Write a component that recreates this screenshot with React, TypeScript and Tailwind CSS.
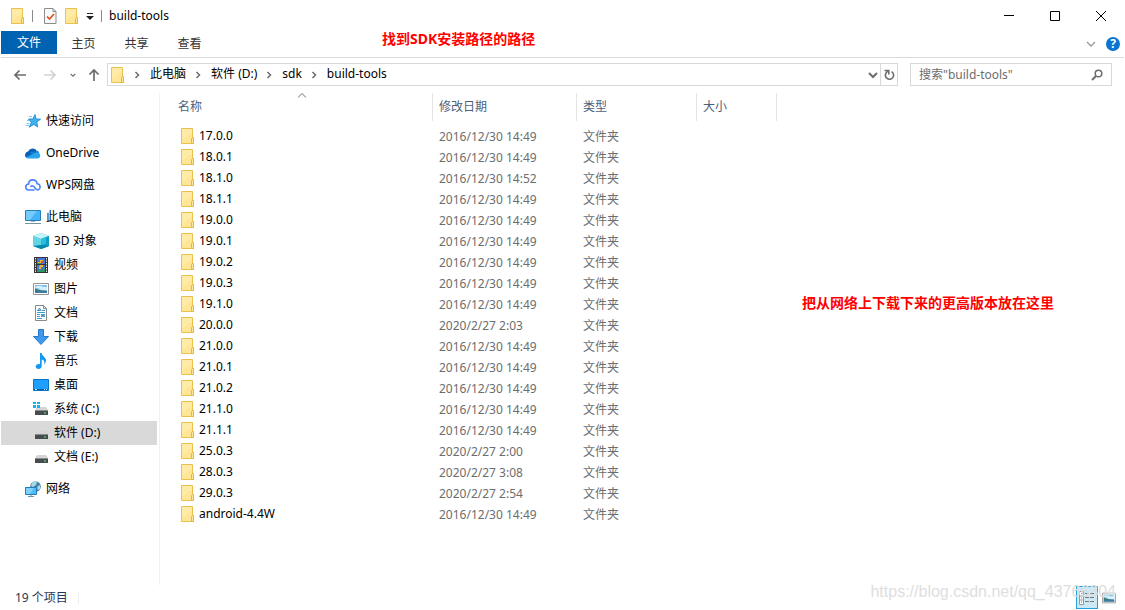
import type { ReactNode } from "react";

type FileRow = {
  name: string;
  date: string;
};

type NavItem = {
  label: string;
  icon: ReactNode;
  nested?: boolean;
  active?: boolean;
};

const files: FileRow[] = [
  { name: "17.0.0", date: "2016/12/30 14:49" },
  { name: "18.0.1", date: "2016/12/30 14:49" },
  { name: "18.1.0", date: "2016/12/30 14:52" },
  { name: "18.1.1", date: "2016/12/30 14:49" },
  { name: "19.0.0", date: "2016/12/30 14:49" },
  { name: "19.0.1", date: "2016/12/30 14:49" },
  { name: "19.0.2", date: "2016/12/30 14:49" },
  { name: "19.0.3", date: "2016/12/30 14:49" },
  { name: "19.1.0", date: "2016/12/30 14:49" },
  { name: "20.0.0", date: "2020/2/27 2:03" },
  { name: "21.0.0", date: "2016/12/30 14:49" },
  { name: "21.0.1", date: "2016/12/30 14:49" },
  { name: "21.0.2", date: "2016/12/30 14:49" },
  { name: "21.1.0", date: "2016/12/30 14:49" },
  { name: "21.1.1", date: "2016/12/30 14:49" },
  { name: "25.0.3", date: "2020/2/27 2:00" },
  { name: "28.0.3", date: "2020/2/27 3:08" },
  { name: "29.0.3", date: "2020/2/27 2:54" },
  { name: "android-4.4W", date: "2016/12/30 14:49" },
];

function FolderIcon() {
  return (
    <svg width="14" height="16" viewBox="0 0 14 16" className="shrink-0" aria-hidden="true">
      <path d="M.5.5h11v9h1v6H.5z" fill="#ffe594" stroke="#eac14d" />
      <path d="M1 1h10v4L1 12z" fill="#ffeba8" />
      <path d="M10.500 15.500v-5l1-1h1v6z" fill="#ffe594" stroke="#e5b93f" />
    </svg>
  );
}

function CheckDocIcon() {
  return (
    <svg width="13" height="16" viewBox="0 0 13 16" aria-hidden="true">
      <path d="M.5.5h8.500l3 3v12H.5z" fill="#f7f9fb" stroke="#8b8b8b" />
      <path d="M9 .5v3h3" fill="none" stroke="#8b8b8b" />
      <path d="M3 8.500l2.500 2.500 4.500-5" fill="none" stroke="#e8501e" strokeWidth="1.700" />
    </svg>
  );
}

function StarIcon() {
  return (
    <svg width="16" height="16" viewBox="0 0 16 16" aria-hidden="true">
      <path d="M10 1.500l1 4.400 4.500.3-3.700 2.800.9 4.900-3.900-2.400-4.500 2.700 2-4.900L3.500 6.100l4.300-.2z" fill="#3fb1ee" stroke="#1784cc" strokeWidth=".8" />
      <path d="M4 3.500h3M2 7.500h3M1.500 10.500h3M1 12.500h3" stroke="#5db9ef" strokeWidth=".8" />
    </svg>
  );
}

function OneDriveIcon() {
  return (
    <svg width="16" height="16" viewBox="0 0 16 16" aria-hidden="true">
      <path d="M1 12.500A3.600 3.600 0 0 1 3 6.500a5 5 0 0 1 8.800-.8L8 12z" fill="#0a62b5" />
      <path d="M5 7.200c1.500-.8 3-.5 4.500.5l3-2.100a3.800 3.800 0 0 1 1.800 2.800L9 11z" fill="#1380d8" />
      <path d="M1 12.300l9-4.200c1-.9 2.300-1 3.300-.2A2.900 2.900 0 0 1 13 13.500H3.500c-1 0-2-.4-2.500-1.200z" fill="#29a5ec" />
    </svg>
  );
}

function WpsCloudIcon() {
  return (
    <svg width="16" height="16" viewBox="0 0 16 16" fill="none" stroke="#4a83f3" strokeWidth="1.600" strokeLinecap="round" aria-hidden="true">
      <path d="M9 13H4a3 3 0 0 1-.4-6C3.700 4.500 5.500 2.900 7.800 2.900c2.200 0 4 1.500 4.300 3.900A3.200 3.200 0 0 1 13 13c-2 0-2.500-1.500-3.500-2.800S7 8.400 6 9.500" />
    </svg>
  );
}

function ComputerIcon() {
  return (
    <svg width="16" height="16" viewBox="0 0 16 16" aria-hidden="true">
      <path d="M.5 1.500h15v10H.5z" fill="#45b3f8" stroke="#277fb3" />
      <path d="M1 2h11L5 11H1z" fill="#76cbff" />
      <path d="M6 12h4v1H6z" fill="#9fb8c7" />
      <path d="M0 14.500h16" stroke="#7891a0" />
    </svg>
  );
}

function CubeIcon() {
  return (
    <svg width="16" height="16" viewBox="0 0 16 16" aria-hidden="true">
      <path d="M0 3l8-3 8 3v10l-8 3-8-3z" fill="#2fb9d2" />
      <path d="M0 3l8-3 8 3-8 3z" fill="#c4f3fa" />
      <path d="M8 6l8-3v10l-8 3z" fill="#0c9fc0" />
      <path d="M0 3l8 3v6l-8 1z" fill="#62d5e4" />
      <path d="M0 13l8-1 8 1-8 3z" fill="#0787aa" />
      <path d="M8 6l5-2v7l-5 1z" fill="#28bdda" />
    </svg>
  );
}

function VideoIcon() {
  return (
    <svg width="16" height="16" viewBox="0 0 16 16" aria-hidden="true">
      <path d="M1 0h14v16H1z" fill="#343434" />
      <path d="M4 1h8v6H4zM4 8h8v7H4z" fill="#4476dc" />
      <path d="M2.500 1v14M13.500 1v14" stroke="#e4e4e4" strokeDasharray="1.500 1" />
      <path d="M5 5h2V3h3v3H5zM7 8h3v2H8v2H6v-2z" fill="#edb62d" />
      <path d="M8 4h2v2H8z" fill="#dd5140" />
      <path d="M4 12l3 1 5-2v4H4zM4 6h4v1H4z" fill="#35936c" />
    </svg>
  );
}

function PictureIcon({ size = 16 }: { size?: number }) {
  return (
    <svg width={size} height={size} viewBox="0 0 16 16" aria-hidden="true">
      <path d="M.5 2.500h15v11H.5z" fill="#fff" stroke="#969696" />
      <path d="M2 4h12v8H2z" fill="#83c3ef" />
      <path d="M4 5h4l2 1h4v3H8L5 7H2z" fill="#d9effc" />
      <path d="M2 7.500l4 1.500 8 1v2H2z" fill="#3d7771" />
      <path d="M2 11l5-1 7 1v1H2z" fill="#3f7fb0" />
    </svg>
  );
}

function DocumentIcon() {
  return (
    <svg width="16" height="16" viewBox="0 0 16 16" aria-hidden="true">
      <path d="M2.500.5h8l3 3v12h-11z" fill="#fff" stroke="#848c91" />
      <path d="M10.500.5v3h3" fill="none" stroke="#848c91" />
      <path d="M4 5.500h3m2 0h3M4 7.500h8M4 9.500h3m1 0h4M4 11.500h3m1 0h4M4 13.500h5" stroke="#3f9ed8" />
      <path d="M5 6l1.500-3L8 6" fill="none" stroke="#2a80be" />
      <path d="M8 9h4v3H8z" fill="#5a9fca" />
    </svg>
  );
}

function DownloadIcon() {
  return (
    <svg width="16" height="16" viewBox="0 0 16 16" aria-hidden="true">
      <path d="M5.500.5h5v7h5L8 15.500.5 7.500h5z" fill="#3c99ed" stroke="#2777c6" />
    </svg>
  );
}

function MusicIcon() {
  return (
    <svg width="16" height="16" viewBox="0 0 16 16" aria-hidden="true">
      <path d="M7 0h1.700c0 3 4.300 4 4.300 7.500 0 1.500-.7 3-1.800 4 .7-3-.2-4.500-2.500-5V13c0 1.800-1.400 3-3.200 3S2.700 15 2.700 13.600 4.200 11 5.800 11c.5 0 .9.1 1.200.3z" fill="#1299f2" />
    </svg>
  );
}

function DesktopIcon() {
  return (
    <svg width="16" height="16" viewBox="0 0 16 16" aria-hidden="true">
      <path d="M.5 2.500h15v11H.5z" fill="#1f9fff" stroke="#0875ca" />
      <path d="M1 12h14v1H1z" fill="#075d9f" />
      <path d="M2 12.500h2m7 0h1m1 0h1" stroke="#c7e9ff" />
    </svg>
  );
}

function DriveIcon({ system }: { system?: boolean }) {
  return (
    <svg width="16" height="16" viewBox="0 0 16 16" aria-hidden="true">
      <path d="M4 6h9l2 3H2z" fill="#d3d5d6" />
      <path d="M2 9h13v5H2z" fill="#484b4d" />
      <path d="M2 9.500h13" stroke="#888c8e" />
      <path d="M11 11.500h2v1h-2z" fill="#45f75c" />
      {system && <path d="M0 1h3v2H0zM4 1h3v2H4zM0 4h3v3H0zM4 4h3v3H4z" fill="#12b4ef" />}
    </svg>
  );
}

function NetworkIcon() {
  return (
    <svg width="16" height="16" viewBox="0 0 16 16" aria-hidden="true">
      <circle cx="10.500" cy="5.500" r="5.300" fill="#4580a5" />
      <path d="M7 2l3-2 2 1-1 3-3 2-2-1zM13 5l2-1v4l-2 1-1-2z" fill="#a9d8e6" />
      <path d="M.5 6.500h11v7H.5z" fill="#4eb9fc" stroke="#227eb3" />
      <path d="M1 7h8l-4 6H1z" fill="#7fd1ff" />
      <path d="M3 15.500h6M6 14v1" stroke="#6d96ac" />
    </svg>
  );
}

function Chevron({ className = "" }: { className?: string }) {
  return (
    <svg width="10" height="10" viewBox="0 0 10 10" fill="none" stroke="currentColor" strokeWidth="1.500" className={className} aria-hidden="true">
      <path d="M2 3.500l3 3 3-3" />
    </svg>
  );
}

const navGroups: NavItem[][] = [
  [{ label: "快速访问", icon: <StarIcon /> }],
  [{ label: "OneDrive", icon: <OneDriveIcon /> }],
  [{ label: "WPS网盘", icon: <WpsCloudIcon /> }],
  [
    { label: "此电脑", icon: <ComputerIcon /> },
    { label: "3D 对象", icon: <CubeIcon />, nested: true },
    { label: "视频", icon: <VideoIcon />, nested: true },
    { label: "图片", icon: <PictureIcon />, nested: true },
    { label: "文档", icon: <DocumentIcon />, nested: true },
    { label: "下载", icon: <DownloadIcon />, nested: true },
    { label: "音乐", icon: <MusicIcon />, nested: true },
    { label: "桌面", icon: <DesktopIcon />, nested: true },
    { label: "系统 (C:)", icon: <DriveIcon system />, nested: true },
    { label: "软件 (D:)", icon: <DriveIcon />, nested: true, active: true },
    { label: "文档 (E:)", icon: <DriveIcon />, nested: true },
  ],
  [{ label: "网络", icon: <NetworkIcon /> }],
];

function TitleBar() {
  return (
    <header className="flex h-[31px] items-center pl-[10px]">
      <FolderIcon />
      <span className="ml-[7px] h-3 w-px bg-[#8a8a8a]" />
      <button type="button" aria-label="属性" className="ml-[11px]">
        <CheckDocIcon />
      </button>
      <button type="button" aria-label="新建文件夹" className="ml-2">
        <FolderIcon />
      </button>
      <button type="button" aria-label="自定义快速访问工具栏" className="ml-[7px]">
        <svg width="8" height="8" viewBox="0 0 8 8" aria-hidden="true">
          <path d="M1 1.500h6" stroke="#222" />
          <path d="M0 4h8L4 8z" fill="#222" />
        </svg>
      </button>
      <span className="ml-[7px] h-3 w-px bg-[#8a8a8a]" />
      <h1 className="ml-[7px]">build-tools</h1>
      <div className="ml-auto flex self-stretch">
        <button type="button" aria-label="最小化" className="flex w-[46px] items-center justify-center">
          <svg width="10" height="11" viewBox="0 0 10 11" stroke="#000" aria-hidden="true">
            <path d="M0 5.500h10" />
          </svg>
        </button>
        <button type="button" aria-label="最大化" className="flex w-[46px] items-center justify-center">
          <svg width="10" height="10" viewBox="0 0 10 10" fill="none" stroke="#000" aria-hidden="true">
            <path d="M.5.5h9v9h-9z" />
          </svg>
        </button>
        <button type="button" aria-label="关闭" className="flex w-[46px] items-center justify-center">
          <svg width="10" height="10" viewBox="0 0 10 10" stroke="#000" aria-hidden="true">
            <path d="M0 0l10 10M10 0L0 10" />
          </svg>
        </button>
      </div>
    </header>
  );
}

function RibbonTabs() {
  return (
    <div className="flex h-[27px] items-start border-b border-[#dadbdc] text-[#333]">
      <button type="button" className="h-[23px] w-14 bg-[#0063b1] pt-px text-white">
        文件
      </button>
      {["主页", "共享", "查看"].map((tab) => (
        <button key={tab} type="button" className="h-[23px] w-[53px] pt-[2px]">
          {tab}
        </button>
      ))}
      <div className="ml-auto flex h-[26px] items-center gap-[10px] pr-1">
        <button type="button" aria-label="展开功能区" className="text-[#9a9a9a]">
          <svg width="10" height="10" viewBox="0 0 10 10" fill="none" stroke="currentColor" strokeWidth="1.300" aria-hidden="true">
            <path d="M1 3l4 4 4-4" />
          </svg>
        </button>
        <button
          type="button"
          aria-label="帮助"
          className="size-[14px] rounded-full bg-[#0a74d1] text-center text-xs leading-[14px] font-bold text-white"
        >
          ?
        </button>
      </div>
    </div>
  );
}

function AddressBar() {
  return (
    <div className="flex h-[35px] items-center pr-3 pb-[2px] pl-3 text-[#6d6d6d]">
      <button type="button" aria-label="后退">
        <svg width="14" height="12" viewBox="0 0 14 12" fill="none" stroke="#6b6b6b" strokeWidth="1.700" aria-hidden="true">
          <path d="M13 6H2M6.500 1.500L2 6l4.500 4.500" />
        </svg>
      </button>
      <button type="button" aria-label="前进" className="ml-4">
        <svg width="14" height="12" viewBox="0 0 14 12" fill="none" stroke="#d2d2d2" strokeWidth="1.700" aria-hidden="true">
          <path d="M1 6h11M7.500 1.500L12 6l-4.500 4.500" />
        </svg>
      </button>
      <button type="button" aria-label="最近浏览的位置" className="ml-3">
        <Chevron className="size-2" />
      </button>
      <button type="button" aria-label="上移" className="ml-[11px]">
        <svg width="12" height="13" viewBox="0 0 12 13" fill="none" stroke="#6b6b6b" strokeWidth="1.700" aria-hidden="true">
          <path d="M6 13V2M1.500 6.500L6 2l4.500 4.500" />
        </svg>
      </button>
      <nav aria-label="路径" className="ml-[7px] flex h-[23px] min-w-0 flex-1 items-center border border-[#d9d9d9] pl-[3px]">
        <FolderIcon />
        {["此电脑", "软件 (D:)", "sdk", "build-tools"].map((part) => (
          <span key={part} className="flex items-center">
            <Chevron className="mr-2 ml-[7px] -rotate-90" />
            <a href="#" className="pb-[2px] text-black">
              {part}
            </a>
          </span>
        ))}
        <button type="button" aria-label="以前的位置" className="ml-auto mr-[2px]">
          <svg width="10" height="10" viewBox="0 0 10 10" fill="none" stroke="currentColor" strokeWidth="2" aria-hidden="true">
            <path d="M1 3l4 4 4-4" />
          </svg>
        </button>
        <button type="button" aria-label="刷新" className="flex w-[17px] items-center justify-center self-stretch border-l border-[#d9d9d9]">
          <svg width="11" height="12" viewBox="0 0 11 12" fill="none" stroke="currentColor" strokeWidth="1.600" aria-hidden="true">
            <path d="M7.500 2.600A4.100 4.100 0 1 1 2.400 3.500L4.300 1.700" />
            <path d="M.5 1.500h4.300v4" />
          </svg>
        </button>
      </nav>
      <div className="ml-3 flex h-[23px] w-[202px] items-center border border-[#d9d9d9] px-2">
        <input
          type="search"
          aria-label="搜索"
          placeholder='搜索"build-tools"'
          className="h-5 min-w-0 flex-1 pb-px outline-none placeholder:text-[#6d6d6d]"
        />
        <svg width="12" height="12" viewBox="0 0 12 12" fill="none" stroke="currentColor" strokeWidth="1.500" aria-hidden="true">
          <circle cx="7.500" cy="4.500" r="3.300" />
          <path d="M5 7L1 11" strokeWidth="2" />
        </svg>
      </div>
    </div>
  );
}

function Sidebar() {
  return (
    <nav aria-label="导航窗格" className="w-[159px] shrink-0 border-r border-[#f0f0f0] pt-4 pr-[2px]">
      <div className="flex flex-col gap-2">
        {navGroups.map((group) => (
          <ul key={group[0].label}>
            {group.map((item) => (
              <li key={item.label}>
                <a
                  href="#"
                  className={`flex h-6 items-center gap-[5px] ${item.nested ? "pl-8" : "pl-6"} ${item.active ? "bg-[#d9d9d9]" : ""}`}
                >
                  {item.icon}
                  {item.label}
                </a>
              </li>
            ))}
          </ul>
        ))}
      </div>
    </nav>
  );
}

function FileTable() {
  return (
    <main className="min-w-0 flex-1 pl-3">
      <table className="table-fixed border-separate border-spacing-0 text-left">
        <colgroup>
          <col className="w-[261px]" />
          <col className="w-36" />
          <col className="w-[120px]" />
          <col className="w-20" />
        </colgroup>
        <thead className="text-[#4c607a]">
          <tr className="h-7">
            <th className="relative border-r border-[#e5e5e5] pl-[6px] font-normal">
              名称
              <svg width="9" height="5" viewBox="0 0 9 5" fill="none" stroke="#6d6d6d" className="absolute top-0 left-1/2 -translate-x-1/2" aria-hidden="true">
                <path d="M.5 4.500l4-4 4 4" />
              </svg>
            </th>
            {["修改日期", "类型", "大小"].map((head) => (
              <th key={head} className="border-r border-[#e5e5e5] pl-[6px] font-normal">
                {head}
              </th>
            ))}
          </tr>
        </thead>
        <tbody className="text-[#6d6d6d] before:block before:h-[5px]">
          {files.map((file) => (
            <tr key={file.name} className="h-[21px]">
              <td className="pl-[9px] align-top">
                <span className="flex h-5 items-center gap-1 text-black">
                  <FolderIcon />
                  {file.name}
                </span>
              </td>
              <td className="pl-[6px]">{file.date}</td>
              <td className="pl-[6px]">文件夹</td>
              <td />
            </tr>
          ))}
        </tbody>
      </table>
    </main>
  );
}

function StatusBar() {
  return (
    <footer className="relative flex h-[25px] items-center pr-2 pl-[14px] text-[#1e395b]">
      <span>19 个项目</span>
      <span className="ml-[10px] h-3 w-px bg-[#eee]" />
      <div className="ml-auto flex items-center gap-1">
        <button type="button" aria-label="详细信息" className="flex h-[23px] w-[22px] items-center justify-center border border-[#26a0da] bg-[#cbe8f6]">
          <svg width="16" height="14" viewBox="0 0 16 14" aria-hidden="true">
            <path d="M.5.5h4v13h-4zM.5 5h4M.5 9h4" fill="#fff" stroke="#999" />
            <path d="M2 2h1v1H2zM2 6.500h1v1H2z" fill="#358ac4" />
            <path d="M2 10.500h1v1H2z" fill="#d33" />
            <path d="M6 2.500h4m1 0h4M6 6.500h4m1 0h4M6 10.500h4m1 0h4" stroke="#777" />
          </svg>
        </button>
        <button type="button" aria-label="大缩略图">
          <PictureIcon size={14} />
        </button>
      </div>
      <span className="pointer-events-none absolute right-2 bottom-2 font-['Liberation_Sans'] text-base leading-5 text-[#dedede]">
        https://blog.csdn.net/qq_43766304
      </span>
    </footer>
  );
}

export default function App() {
  return (
    <div className="relative flex min-h-screen flex-col bg-white px-px font-['Noto_Sans','Noto_Sans_CJK_SC',sans-serif] text-xs text-black">
      <TitleBar />
      <RibbonTabs />
      <AddressBar />
      <div className="flex flex-1">
        <Sidebar />
        <FileTable />
      </div>
      <StatusBar />
      <p className="absolute top-[29px] left-[382px] text-sm font-bold text-[#f00]">找到SDK安装路径的路径</p>
      <p className="absolute top-[293px] left-[802px] text-sm font-bold text-[#f00]">把从网络上下载下来的更高版本放在这里</p>
    </div>
  );
}
